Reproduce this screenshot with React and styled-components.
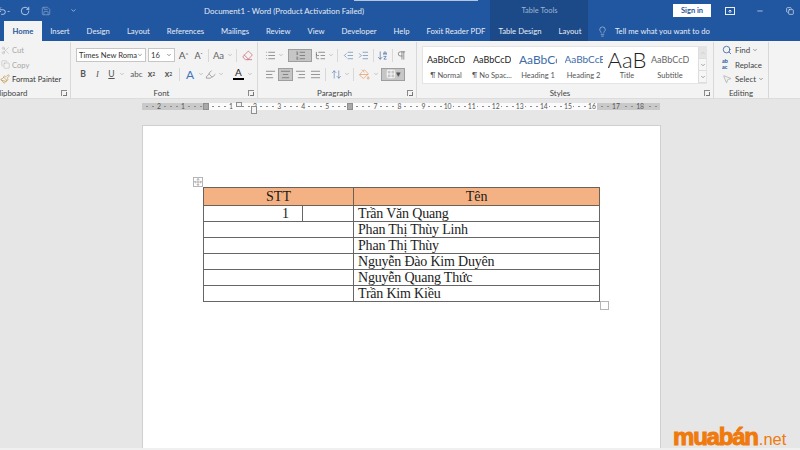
import React from "react";
import styled, { createGlobalStyle } from "styled-components";
import {
  Undo2, RotateCw, Save, Scissors, Copy, Paintbrush, Lightbulb, Search, MousePointer2, Eraser,
  ArrowDownAZ, Pilcrow, PaintBucket, Grid2x2, ChevronDown, ChevronUp, Minus, List, ListOrdered, ListTree,
  IndentDecrease, IndentIncrease, AlignLeft, AlignCenter, AlignRight, AlignJustify, Move, Highlighter, ArrowUpDown,
} from "lucide-react";

const Global = createGlobalStyle`
  html, body { margin: 0; padding: 0; background: #e6e6e6; }
  * { box-sizing: border-box; }
`;
const UI = `Lato, "Open Sans", sans-serif`;

const Root = styled.div`
  position: relative; width: 800px; height: 450px; overflow: hidden;
  display: flex; flex-direction: column; font-family: ${UI}; background: #e6e6e6;
`;
const TopStrip = styled.div`
  position: absolute; left: 354px; top: 0; width: 124px; height: 1px; background: #b4c6de;
`;
const TitleRow = styled.div`
  height: 21px; display: flex; align-items: center; background: #2156a0; color: #e4ebf5; flex: none;
`;
const Qat = styled.div`
  width: 204px; flex: none; display: flex; align-items: center; color: #dfe8f4; font-size: 8px;
`;
const QatItem = styled.span`
  display: flex; flex: none; width: ${p => p.$w}px; margin-left: ${p => p.$ml || 0}px; opacity: ${p => p.$dim ? 0.45 : 1};
`;
const DocTitle = styled.div`
  width: 286px; flex: none; font-size: 7.9px; white-space: nowrap;
`;
const ContextTitle = styled.div`
  width: 98px; height: 21px; flex: none; background: #1c4a88; color: #9db4d4; font-size: 7.5px;
  display: flex; align-items: center; justify-content: center; padding-left: 1px;
`;
const SignIn = styled.div`
  width: 38px; height: 13px; flex: none; margin-left: 85px; background: #fff; color: #2b579a; font-size: 7.5px; font-weight: 700;
  display: flex; align-items: center; justify-content: center;
`;
const WinBtn = styled.span`
  display: flex; flex: none; justify-content: center; width: 30px; margin-left: ${p => p.$ml || 0}px; color: #e8eef7;
`;
const TabRow = styled.div`
  height: 20px; display: flex; align-items: stretch; background: #2156a0; padding-left: 4px; flex: none;
`;
const MainTabs = styled.div`
  width: 486px; flex: none; display: flex; align-items: stretch;
`;
const Tab = styled.div`
  display: flex; align-items: center; padding: 0 8.5px; font-size: 7.7px; white-space: nowrap;
  color: ${p => p.$active ? "#2b579a" : "#e6edf6"};
  background: ${p => p.$active ? "#f3f3f3" : "transparent"};
  font-weight: ${p => p.$active ? 700 : 400};
`;
const ContextTabs = styled.div`
  display: flex; width: 98px; flex: none; background: #1c4a88;
`;
const TellMe = styled.div`
  display: flex; align-items: center; gap: 7px; margin-left: 9px; color: #e6edf6; font-size: 7.7px; white-space: nowrap;
`;
const Ribbon = styled.div`
  height: 58px; flex: none; display: flex; background: #f3f3f3; border-bottom: 1px solid #dcdcdc;
`;
const Group = styled.div`
  width: ${p => p.$w}px; height: 56px; flex: none; display: flex; flex-direction: column; position: relative;
  border-right: 1px solid #d8d8d8; padding-left: ${p => p.$pl || 0}px; margin-top: 1px;
`;
const GroupBody = styled.div`
  flex: 1; display: flex; flex-direction: column; min-height: 0; padding-top: 1px;
`;
const GroupLabel = styled.div`
  height: 10px; font-size: 7.9px; line-height: 10px; color: #444; white-space: nowrap; flex: none;
  text-align: ${p => p.$left ? "left" : "center"};
  margin-left: ${p => p.$ml || 0}px;
  padding-right: ${p => p.$pr ?? 10}px;
`;
const Launcher = styled.span`
  position: absolute; right: 3px; bottom: 2px; width: 6px; height: 6px;
  border-left: 1px solid #8a8a8a; border-top: 1px solid #8a8a8a;
  &::after { content: ""; position: absolute; right: 0; bottom: 0; width: 3px; height: 3px; border-right: 1px solid #777; border-bottom: 1px solid #777; }
`;
const ClipItem = styled.div`
  height: 14.5px; display: flex; align-items: center; gap: 2px; font-size: 7.6px; white-space: nowrap;
  color: ${p => p.$off ? "#a8a8a8" : "#333"}; margin-left: ${p => p.$ml || 0}px;
`;
const Row = styled.div`
  display: flex; align-items: center; height: ${p => p.$h || 14}px; margin-top: ${p => p.$mt || 0}px;
`;
const Combo = styled.div`
  width: ${p => p.$w}px; height: 14px; flex: none; background: #fff; border: 1px solid #c6c6c6; margin-right: ${p => p.$mr || 0}px;
  display: flex; align-items: center; justify-content: space-between; padding: 0 2px;
  font-size: 7.6px; color: #333; white-space: nowrap; overflow: hidden;
`;
const Btn = styled.div`
  width: ${p => p.$w}px; height: ${p => p.$h || 13}px; flex: none; display: flex; align-items: center; justify-content: center;
  color: ${p => p.$c || "#555"}; font-size: ${p => p.$fs || 8.6}px; font-family: ${p => p.$serif ? `"Liberation Serif", serif` : "inherit"};
  font-weight: ${p => p.$b ? 700 : 400}; font-style: ${p => p.$i ? "italic" : "normal"};
  text-decoration: ${p => p.$u ? "underline" : "none"};
  background: ${p => p.$sel ? "#c6c6c6" : "transparent"}; border: ${p => p.$sel ? "1px solid #9e9e9e" : "0"};
  margin-left: ${p => p.$ml || 0}px; white-space: nowrap;
`;
const Sep = styled.span`
  width: 1px; height: 13px; background: #d8d8d8; flex: none; margin: 0 ${p => p.$m ?? 4}px;
`;
const Sup = styled.sup`font-size: 5px; line-height: 0;`;
const Sub = styled.sub`font-size: 5px; line-height: 0;`;
const ColorA = styled.span`
  display: flex; flex-direction: column; align-items: center; font-size: 10px; line-height: 9px; color: #222;
  &::after { content: ""; width: 11px; height: 2px; background: #000; margin-top: 1px; }
`;
const Gallery = styled.div`
  width: 285px; height: 38px; margin: 3px 0 0 5px; display: flex; background: #fff; border: 1px solid #e4e4e4;
`;
const StyleItem = styled.div`
  width: ${p => p.$w}px; flex: none; display: flex; flex-direction: column; align-items: center; overflow: hidden;
`;
const Sample = styled.div`
  height: 24px; display: flex; align-items: center; white-space: nowrap; overflow: hidden; max-width: 38px;
  color: ${p => p.$c || "#222"}; font-size: ${p => p.$fs || 8}px; font-weight: ${p => p.$light ? 300 : 400};
`;
const TitleSample = styled(Sample)`max-width: 100%;`;
const StyleName = styled.div`
  font-size: 7.5px; color: #555; white-space: nowrap; line-height: 10px;
`;
const GalleryScroll = styled.div`
  width: 8px; display: flex; flex-direction: column; flex: none; border-left: 1px solid #ddd; margin-left: auto;
`;
const ScrollBtn = styled.div`
  flex: 1; display: flex; align-items: center; justify-content: center; color: ${p => p.$off ? "#bbb" : "#555"};
  background: ${p => p.$off ? "#e4e4e4" : "#f6f6f6"}; border-bottom: 1px solid #ddd;
`;
const EditItem = styled.div`
  height: 14.5px; display: flex; align-items: center; gap: 2px; font-size: 7.9px; color: #444; white-space: nowrap;
`;
const AbAc = styled.span`
  width: 11px; height: 11px; font-size: 5.5px; line-height: 5.5px; color: #2b579a; font-weight: 700; display: block; overflow: hidden;
`;
const EditIcon = styled.span`display: flex; width: 11px; flex: none;`;
const Workspace = styled.div`
  flex: 1; min-height: 0; display: flex; flex-direction: column; background: #e6e6e6; position: relative;
`;
const Ruler = styled.div`
  position: relative; display: flex; width: 518px; height: 7px; margin: 4px 0 0 142px; flex: none;
  font-size: 6.8px; line-height: 7px; color: #555;
`;
const RulerPart = styled.div`
  flex: none; width: ${p => p.$w}px; display: flex; padding-left: ${p => p.$pl || 0}px;
  background-color: ${p => p.$gray ? "#c9c9c9" : "#fbfbfb"};
  background-image: radial-gradient(circle at 50% 50%, #8c8c8c 0.5px, transparent 0.8px);
  background-size: 6px 7px; background-position: ${p => p.$bg || 0}px 0;
`;
const RulerNum = styled.span`
  flex: none; width: 24.07px; display: flex; justify-content: center;
  & > b { font-weight: 400; padding: 0 1px; background: ${p => p.$gray ? "#c9c9c9" : "#fbfbfb"}; }
`;
const IndentMark = styled.span`
  position: absolute; left: ${p => p.$x}px; top: ${p => p.$y}px; width: 6px; height: ${p => p.$h || 5}px;
  border: 1px solid #8f8f8f; background: ${p => p.$bg || "#f4f4f4"};
`;
const Page = styled.div`
  flex: 1; min-height: 0; margin: 16px 140px 2px 143px; background: #fff; box-shadow: 0 0 0 1px #d0d0d0;
  padding: 61px 60px 0 60px; position: relative;
`;
const TableWrap = styled.div`position: relative; width: 397px;`;
const DocTable = styled.table`
  width: 397px; border-collapse: collapse; table-layout: fixed; font-family: "Liberation Serif", serif; color: #1c1c1c;
  font-size: 14px;
`;
const HeadCell = styled.th`
  height: 18px; padding: 0; font-weight: 400; text-align: center; background: #f4b183; border: 1px solid #6b6155; line-height: 16px;
`;
const Cell = styled.td`
  height: 16px; padding: ${p => p.$num ? "0 13px 0 0" : "0 0 0 4px"}; text-align: ${p => p.$num ? "right" : "left"};
  border: 1px solid #666; line-height: 15px; white-space: nowrap; overflow: visible;
  letter-spacing: ${p => p.$num ? 0 : -0.2}px;
`;
const MoveHandle = styled.span`
  position: absolute; left: -10px; top: -10px; width: 10px; height: 10px; background: #fff; border: 1px solid #b5b5b5;
  display: flex; align-items: center; justify-content: center; color: #555;
`;
const ResizeHandle = styled.span`
  position: absolute; left: 397px; top: 114px; width: 9px; height: 9px; background: #fff; border: 1px solid #b5b5b5;
`;
const Logo = styled.div`
  position: absolute; left: 673px; top: 423px; display: flex; align-items: baseline; color: #f07a0c; white-space: nowrap;
  font-family: "Liberation Sans", sans-serif;
`;
const LogoMain = styled.span`
  font-size: 24px; font-weight: 700; -webkit-text-stroke: 1px #f07a0c; letter-spacing: -1.2px; line-height: 27px;
`;
const LogoNet = styled.span`font-size: 16.5px; margin-left: 1px;`;
const Scroll = styled.div`
  position: absolute; left: 0; right: 0; bottom: 0; height: 2px; background: #f0f0f0;
`;

const ic = { size: 11, strokeWidth: 1.3 };
const Caret = ({ ml }) => <Btn $w={7} $ml={ml} $c="#777"><ChevronDown size={6} strokeWidth={1.5} /></Btn>;

const names = ["Trần Văn Quang", "Phan Thị Thùy Linh", "Phan Thị Thùy", "Nguyễn Đào Kim Duyên", "Nguyễn Quang Thức", "Trần Kim Kiều"];

export default function App() {
  return (
    <Root>
      <Global />
      <TopStrip />
      <TitleRow>
        <Qat>
          <QatItem $w={10} $ml={-3}><Undo2 size={10} strokeWidth={1.8} /></QatItem>
          <QatItem $w={10}>-</QatItem>
          <QatItem $w={20} $ml={3}><RotateCw size={10} strokeWidth={1.8} /></QatItem>
          <QatItem $w={20} $ml={1} $dim><Save size={10} /></QatItem>
          <QatItem $w={10} $ml={9}><ChevronDown size={7} strokeWidth={2} /></QatItem>
        </Qat>
        <DocTitle>Document1 - Word (Product Activation Failed)</DocTitle>
        <ContextTitle>Table Tools</ContextTitle>
        <SignIn>Sign in</SignIn>
        <WinBtn $ml={4}><svg width="10" height="8" viewBox="0 0 10 8" fill="none" stroke="currentColor"><rect x=".5" y=".5" width="9" height="7" /><path d="M5 6V3M3.5 4.5 5 3l1.5 1.5" /></svg></WinBtn>
        <WinBtn><Minus size={8} /></WinBtn>
        <WinBtn><Copy size={8} /></WinBtn>
      </TitleRow>
      <TabRow>
        <MainTabs>
          <Tab $active>Home</Tab>
          <Tab>Insert</Tab>
          <Tab>Design</Tab>
          <Tab>Layout</Tab>
          <Tab>References</Tab>
          <Tab>Mailings</Tab>
          <Tab>Review</Tab>
          <Tab>View</Tab>
          <Tab>Developer</Tab>
          <Tab>Help</Tab>
          <Tab>Foxit Reader PDF</Tab>
        </MainTabs>
        <ContextTabs>
          <Tab>Table Design</Tab>
          <Tab>Layout</Tab>
        </ContextTabs>
        <TellMe><Lightbulb size={11} strokeWidth={1.1} />Tell me what you want to do</TellMe>
      </TabRow>
      <Ribbon>
        <Group $w={71}>
          <GroupBody>
            <ClipItem $off $ml={1}><Scissors size={9} strokeWidth={1.2} />Cut</ClipItem>
            <ClipItem $off $ml={1}><Copy size={9} strokeWidth={1.2} />Copy</ClipItem>
            <ClipItem><Paintbrush size={10} color="#b88b3a" strokeWidth={1.5} />Format Painter</ClipItem>
          </GroupBody>
          <GroupLabel $left $ml={-6} $pr={0}>Clipboard</GroupLabel>
          <Launcher />
        </Group>
        <Group $w={187} $pl={5}>
          <GroupBody>
            <Row $mt={5}>
              <Combo $w={70} $mr={2}>Times New Roma <ChevronDown size={6} /></Combo>
              <Combo $w={27}>16 <ChevronDown size={6} /></Combo>
              <Btn $w={15} $ml={1} $fs={10}>A<Sup>^</Sup></Btn>
              <Btn $w={15} $fs={9}>A<Sup>ˇ</Sup></Btn>
              <Sep $m={2} />
              <Btn $w={15} $fs={9.5} $c="#666">Aa</Btn>
              <Caret />
              <Sep $m={3} />
              <Btn $w={15} $c="#c8566a"><Eraser size={11} strokeWidth={1.5} /></Btn>
            </Row>
            <Row $mt={5}>
              <Btn $w={14} $b>B</Btn>
              <Btn $w={15} $i $serif>I</Btn>
              <Btn $w={13} $u>U</Btn>
              <Caret />
              <Btn $w={17} $ml={3} $fs={8}>abc</Btn>
              <Btn $w={13} $b>x<Sub>2</Sub></Btn>
              <Btn $w={15} $ml={3} $b>x<Sup>2</Sup></Btn>
              <Sep $m={3} />
              <Btn $w={14} $c="#3f76c0" $fs={12}>A</Btn>
              <Caret />
              <Btn $w={13} $c="#777"><Highlighter size={11} strokeWidth={1.4} /></Btn>
              <Caret />
              <Btn $w={15} $ml={7}><ColorA>A</ColorA></Btn>
              <Caret />
            </Row>
          </GroupBody>
          <GroupLabel>Font</GroupLabel>
          <Launcher />
        </Group>
        <Group $w={159} $pl={5}>
          <GroupBody>
            <Row $mt={5}>
              <Btn $w={14}><List {...ic} /></Btn>
              <Caret />
              <Btn $w={24} $sel $ml={4}><ListOrdered {...ic} /></Btn>
              <Btn $w={14} $ml={1}><ListTree {...ic} /></Btn>
              <Caret />
              <Sep $m={3} />
              <Btn $w={15}><IndentDecrease {...ic} color="#4a74ad" /></Btn>
              <Btn $w={15}><IndentIncrease {...ic} color="#4a74ad" /></Btn>
              <Sep $m={1.5} />
              <Btn $w={15} $c="#2b579a"><ArrowDownAZ {...ic} /></Btn>
              <Sep $m={1.5} />
              <Btn $w={14}><Pilcrow {...ic} /></Btn>
            </Row>
            <Row $mt={5}>
              <Btn $w={14}><AlignLeft {...ic} /></Btn>
              <Btn $w={15} $sel $ml={1}><AlignCenter {...ic} /></Btn>
              <Btn $w={15}><AlignRight {...ic} /></Btn>
              <Btn $w={14}><AlignJustify {...ic} /></Btn>
              <Sep $m={3} />
              <Btn $w={14} $c="#4a74ad"><ArrowUpDown {...ic} /></Btn>
              <Caret />
              <Sep $m={3} />
              <Btn $w={15} $c="#e08a4a"><PaintBucket {...ic} /></Btn>
              <Caret />
              <Btn $w={24} $sel $ml={2}><Grid2x2 size={10} color="#fff" />▾</Btn>
            </Row>
          </GroupBody>
          <GroupLabel>Paragraph</GroupLabel>
          <Launcher />
        </Group>
        <Group $w={297}>
          <GroupBody>
            <Gallery>
              <StyleItem $w={46}><Sample $fs={9}>AaBbCcDc</Sample><StyleName>¶ Normal</StyleName></StyleItem>
              <StyleItem $w={46}><Sample $fs={9}>AaBbCcDc</Sample><StyleName>¶ No Spac...</StyleName></StyleItem>
              <StyleItem $w={46}><Sample $fs={12} $c="#3d6ca8">AaBbCc</Sample><StyleName>Heading 1</StyleName></StyleItem>
              <StyleItem $w={45}><Sample $fs={10} $c="#3d6ca8">AaBbCcE</Sample><StyleName>Heading 2</StyleName></StyleItem>
              <StyleItem $w={42}><TitleSample $fs={22} $light>AaB</TitleSample><StyleName>Title</StyleName></StyleItem>
              <StyleItem $w={44}><Sample $fs={9} $c="#666">AaBbCcDc</Sample><StyleName>Subtitle</StyleName></StyleItem>
              <GalleryScroll>
                <ScrollBtn $off><ChevronUp size={6} /></ScrollBtn>
                <ScrollBtn><ChevronDown size={6} /></ScrollBtn>
                <ScrollBtn><ChevronDown size={6} /></ScrollBtn>
              </GalleryScroll>
            </Gallery>
          </GroupBody>
          <GroupLabel>Styles</GroupLabel>
          <Launcher />
        </Group>
        <Group $w={55} $pl={8}>
          <GroupBody>
            <EditItem><EditIcon><Search size={10} color="#2b579a" strokeWidth={1.8} /></EditIcon>Find <ChevronDown size={6} /></EditItem>
            <EditItem><AbAc>ab<br />ac</AbAc>Replace</EditItem>
            <EditItem><EditIcon><MousePointer2 size={10} color="#888" strokeWidth={1.2} /></EditIcon>Select <ChevronDown size={6} /></EditItem>
          </GroupBody>
          <GroupLabel $pr={8}>Editing</GroupLabel>
        </Group>
      </Ribbon>
      <Workspace>
        <Ruler>
          <RulerPart $w={65} $gray $pl={5} $bg={2}>
            <RulerNum $gray><b>2</b></RulerNum>
            <RulerNum $gray><b>1</b></RulerNum>
          </RulerPart>
          <RulerPart $w={390} $pl={12} $bg={3}>
            {[1, 2, 3, 4, 5, "", 7, 8, 9, 10, 11, 12, 13, 14, 15, 16].map((n, i) => (
              <RulerNum key={i}><b>{n}</b></RulerNum>
            ))}
          </RulerPart>
          <RulerPart $w={63} $gray $pl={7} $bg={2}>
            <RulerNum $gray><b>17</b></RulerNum>
            <RulerNum $gray><b>18</b></RulerNum>
          </RulerPart>
          <IndentMark $x={94} $y={-1} $h={5} />
          <IndentMark $x={109} $y={3} $h={8} />
          <IndentMark $x={205} $y={0} $h={7} $bg="#a9a9a9" />
          <IndentMark $x={61} $y={0} $h={7} $bg="#a9a9a9" />
        </Ruler>
        <Page>
          <TableWrap>
            <MoveHandle><Move size={8} strokeWidth={1.2} /></MoveHandle>
            <DocTable>
              <colgroup>
                <col style={{ width: 99 }} />
                <col style={{ width: 51 }} />
                <col />
              </colgroup>
              <thead>
                <tr>
                  <HeadCell colSpan={2}>STT</HeadCell>
                  <HeadCell>Tên</HeadCell>
                </tr>
              </thead>
              <tbody>
                {names.map((n, i) => (
                  <tr key={n}>
                    {i === 0 ? (
                      <>
                        <Cell $num>1</Cell>
                        <Cell />
                      </>
                    ) : (
                      <Cell colSpan={2} />
                    )}
                    <Cell>{n}</Cell>
                  </tr>
                ))}
              </tbody>
            </DocTable>
            <ResizeHandle />
          </TableWrap>
        </Page>
        <Scroll />
      </Workspace>
      <Logo><LogoMain>muabán</LogoMain><LogoNet>.net</LogoNet></Logo>
    </Root>
  );
}
